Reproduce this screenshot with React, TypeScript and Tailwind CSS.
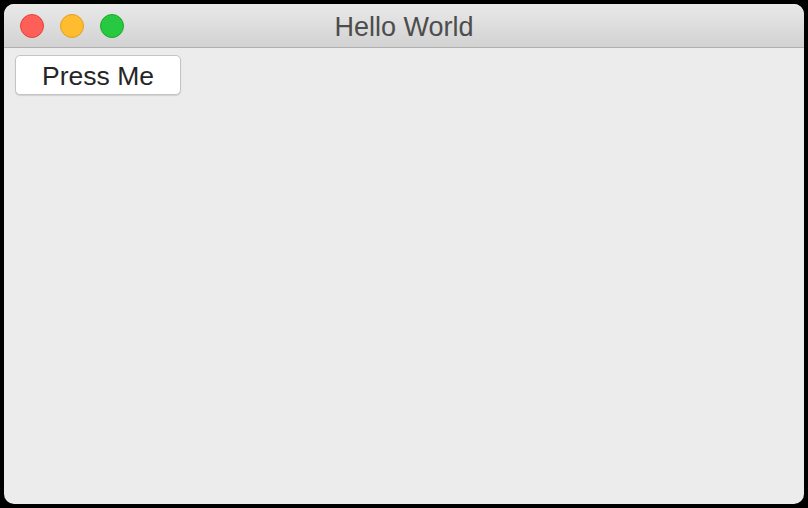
import React from "react";

export default function App() {
    return (
        <div className="w-[808px] h-[508px] bg-black p-[4px] font-['Liberation_Sans',Arial,sans-serif]">
            <div className="w-full h-full rounded-[10px] overflow-hidden bg-[#ececec] flex flex-col">
                <div className="h-[44px] shrink-0 relative flex items-center justify-center bg-gradient-to-b from-[#e9e9e9] to-[#d2d2d2] border-b border-[#b1b1b1]">
                    <div className="absolute left-[16px] top-[10px] flex gap-[16px]">
                        <span className="w-[24px] h-[24px] rounded-full bg-[#fe5f57] border border-[#e0443e]"/>
                        <span className="w-[24px] h-[24px] rounded-full bg-[#febc2e] border border-[#dea123]"/>
                        <span className="w-[24px] h-[24px] rounded-full bg-[#28c840] border border-[#1aab29]"/>
                    </div>
                    <span className="text-[27px] leading-none text-[#4d4d4d] pt-[3px]">Hello World</span>
                </div>
                <div className="p-[11px] pt-[7px]">
                    <button
                        className="w-[166px] h-[40px] bg-white rounded-[5px] border border-[#c4c4c4] shadow-[0_1px_1px_rgba(0,0,0,0.12)] text-[26.5px] leading-none text-[#262626] flex items-center justify-center pt-[2px]">
                        Press Me
                    </button>
                </div>
            </div>
        </div>
    );
}
